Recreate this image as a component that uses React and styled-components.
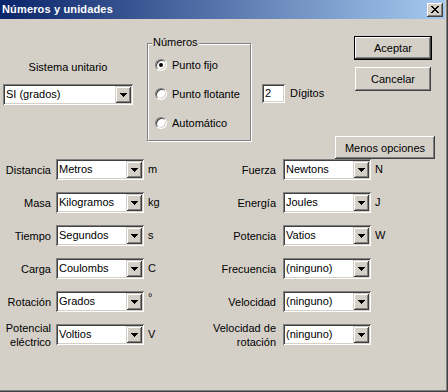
import React from 'react';
import styled, { createGlobalStyle } from 'styled-components';

const Global = createGlobalStyle`
  html, body { margin: 0; padding: 0; background: #D4D0C8; }
  body { font-family: "Liberation Sans", Arial, sans-serif; font-size: 11px; color: #000; }
  * { box-sizing: border-box; }
`;

const Window = styled.div`
  position: relative;
  width: 448px;
  height: 392px;
  background: #D4D0C8;
  border-right: 1px solid #404040;
  border-bottom: 1px solid #404040;
  box-shadow: inset -1px -1px 0 #808080;
  display: flex;
  flex-direction: column;
  overflow: hidden;
`;

const TitleBar = styled.div`
  height: 19px;
  margin-right: 2px;
  flex: none;
  display: flex;
  align-items: center;
  justify-content: space-between;
  padding: 0 2px 0 2px;
  background: linear-gradient(to right, #0A246A, #A6CAF0);
`;

const Title = styled.span`
  color: #fff;
  font-weight: bold;
  font-size: 11px;
  letter-spacing: 0.15px;
  line-height: 13px;
`;

const CloseBtn = styled.div`
  width: 16px;
  height: 14px;
  display: flex;
  align-items: center;
  justify-content: center;
  background: #D4D0C8;
  box-shadow: inset -1px -1px 0 #404040, inset 1px 1px 0 #fff, inset -2px -2px 0 #808080, inset 2px 2px 0 #D4D0C8;
`;

const TopArea = styled.div`
  height: 140px;
  flex: none;
  display: flex;
  align-items: flex-start;
`;

const SystemCol = styled.div`
  width: 130px;
  margin-left: 3px;
  margin-top: 42px;
  display: flex;
  flex-direction: column;
  align-items: center;
  gap: 10px;
`;

const Text = styled.span`
  line-height: 13px;
  white-space: nowrap;
`;

const Combo = styled.div`
  width: ${p => p.$w || 88}px;
  height: 21px;
  padding: 2px;
  display: flex;
  background: #fff;
  box-shadow: inset 1px 1px 0 #808080, inset -1px -1px 0 #fff, inset 2px 2px 0 #404040, inset -2px -2px 0 #D4D0C8;
`;

const ComboText = styled.div`
  flex: 1;
  padding-left: 1px;
  line-height: 17px;
  white-space: nowrap;
  overflow: hidden;
`;

const DropBtn = styled.div`
  width: 16px;
  height: 17px;
  flex: none;
  display: flex;
  align-items: center;
  justify-content: center;
  background: #D4D0C8;
  box-shadow: inset 1px 1px 0 #D4D0C8, inset -1px -1px 0 #404040, inset 2px 2px 0 #fff, inset -2px -2px 0 #808080;
`;

const Arrow = () => (
  <svg width="7" height="4" viewBox="0 0 7 4" shapeRendering="crispEdges">
    <rect x="0" y="0" width="7" height="1" fill="#000" />
    <rect x="1" y="1" width="5" height="1" fill="#000" />
    <rect x="2" y="2" width="3" height="1" fill="#000" />
    <rect x="3" y="3" width="1" height="1" fill="#000" />
  </svg>
);

const ComboBox = ({ value, w }) => (
  <Combo $w={w}>
    <ComboText>{value}</ComboText>
    <DropBtn><Arrow /></DropBtn>
  </Combo>
);

const GroupBox = styled.div`
  position: relative;
  margin-left: 14px;
  margin-top: 24px;
  width: 104px;
  height: 98px;
  border: 1px solid #808080;
  box-shadow: inset 1px 1px 0 #fff, 1px 1px 0 #fff;
  padding: 14px 0 0 7px;
  display: flex;
  flex-direction: column;
  gap: 16px;
`;

const Legend = styled.span`
  position: absolute;
  left: 4px;
  top: -8px;
  padding: 0 1px;
  line-height: 13px;
  background: #D4D0C8;
`;

const RadioRow = styled.div`
  display: flex;
  align-items: center;
  gap: 5px;
  height: 13px;
  white-space: nowrap;
`;

const RadioCircle = styled.span`
  width: 12px;
  height: 12px;
  flex: none;
  border-radius: 50%;
  background: #fff;
  border: 1px solid;
  border-color: #808080 #fff #fff #808080;
  box-shadow: inset 1px 1px 0 #404040, inset -1px -1px 0 #D4D0C8;
  display: flex;
  align-items: center;
  justify-content: center;
  &::after {
    content: '';
    width: 4px;
    height: 4px;
    border-radius: 50%;
    background: ${p => (p.$checked ? '#000' : 'transparent')};
  }
`;

const DigitsRow = styled.div`
  margin-left: 11px;
  margin-top: 65px;
  display: flex;
  align-items: center;
  gap: 5px;
`;

const NumInput = styled.div`
  width: 23px;
  height: 19px;
  padding: 2px 0 0 3px;
  line-height: 15px;
  background: #fff;
  box-shadow: inset 1px 1px 0 #808080, inset -1px -1px 0 #fff, inset 2px 2px 0 #404040, inset -2px -2px 0 #D4D0C8;
`;

const ButtonCol = styled.div`
  margin-left: auto;
  margin-right: 12px;
  margin-top: 17px;
  display: flex;
  flex-direction: column;
  align-items: flex-end;
`;

const Button = styled.div`
  width: ${p => p.$w}px;
  height: ${p => p.$h || 23}px;
  margin-top: ${p => p.$mt || 0}px;
  margin-right: ${p => p.$mr || 0}px;
  display: flex;
  align-items: center;
  justify-content: center;
  background: #D4D0C8;
  border: ${p => (p.$default ? '1px solid #000' : 'none')};
  box-shadow: inset -1px -1px 0 #404040, inset 1px 1px 0 #fff, inset -2px -2px 0 #808080;
  white-space: nowrap;
`;

const UnitsGrid = styled.div`
  display: grid;
  grid-template-columns: 56px 92px 40px 95px 92px 1fr;
  grid-auto-rows: 21px;
  row-gap: 12px;
  align-items: center;
`;

const FieldLabel = styled.span`
  text-align: right;
  padding-right: ${p => (p.$right ? 7 : 5)}px;
  line-height: 14px;
  white-space: pre-line;
`;

const Unit = styled.span`
  line-height: 13px;
`;

const leftRows = [
  ['Distancia', 'Metros', 'm'],
  ['Masa', 'Kilogramos', 'kg'],
  ['Tiempo', 'Segundos', 's'],
  ['Carga', 'Coulombs', 'C'],
  ['Rotación', 'Grados', '°'],
  ['Potencial\neléctrico', 'Voltios', 'V'],
];

const rightRows = [
  ['Fuerza', 'Newtons', 'N'],
  ['Energía', 'Joules', 'J'],
  ['Potencia', 'Vatios', 'W'],
  ['Frecuencia', '(ninguno)', ''],
  ['Velocidad', '(ninguno)', ''],
  ['Velocidad de\nrotación', '(ninguno)', ''],
];

export default function App() {
  return (
    <>
      <Global />
      <Window>
        <TitleBar>
          <Title>Números y unidades</Title>
          <CloseBtn>
            <svg width="8" height="7" viewBox="0 0 8 7" shapeRendering="crispEdges">
              <path d="M0 0h2v1h-2zM6 0h2v1h-2zM1 1h2v1h-2zM5 1h2v1h-2zM2 2h4v1h-4zM3 3h2v1h-2zM2 4h4v1h-4zM1 5h2v1h-2zM5 5h2v1h-2zM0 6h2v1h-2zM6 6h2v1h-2z" fill="#000" />
            </svg>
          </CloseBtn>
        </TitleBar>
        <TopArea>
          <SystemCol>
            <Text>Sistema unitario</Text>
            <ComboBox value="SI (grados)" w={130} />
          </SystemCol>
          <GroupBox>
            <Legend>Números</Legend>
            <RadioRow><RadioCircle $checked />Punto fijo</RadioRow>
            <RadioRow><RadioCircle />Punto flotante</RadioRow>
            <RadioRow><RadioCircle />Automático</RadioRow>
          </GroupBox>
          <DigitsRow>
            <NumInput>2</NumInput>
            <Text>Dígitos</Text>
          </DigitsRow>
          <ButtonCol>
            <Button $w={78} $h={24} $mr={3} $default>Aceptar</Button>
            <Button $w={76} $h={24} $mr={4} $mt={7}>Cancelar</Button>
            <Button $w={100} $h={23} $mt={45}>Menos opciones</Button>
          </ButtonCol>
        </TopArea>
        <UnitsGrid>
          {leftRows.map((l, i) => {
            const r = rightRows[i];
            return (
              <React.Fragment key={i}>
                <FieldLabel>{l[0]}</FieldLabel>
                <ComboBox value={l[1]} />
                <Unit style={{ alignSelf: l[2] === '°' ? 'start' : 'center' }}>{l[2]}</Unit>
                <FieldLabel $right>{r[0]}</FieldLabel>
                <ComboBox value={r[1]} />
                <Unit>{r[2]}</Unit>
              </React.Fragment>
            );
          })}
        </UnitsGrid>
      </Window>
    </>
  );
}
